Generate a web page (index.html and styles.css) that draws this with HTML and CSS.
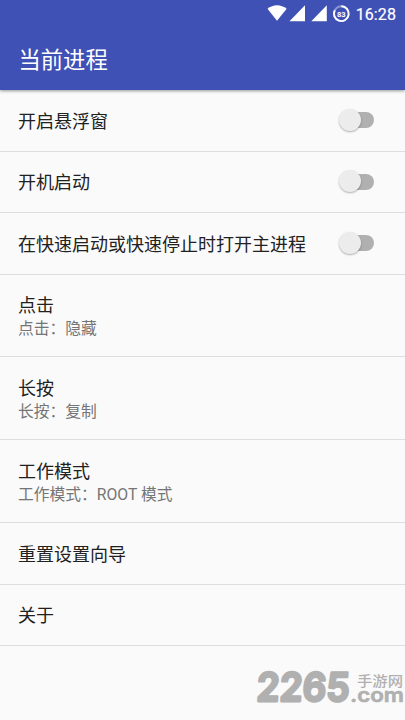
FILE: index.html
```
<!DOCTYPE html>
<html lang="zh-CN">
<head>
<meta charset="utf-8">
<title>当前进程</title>
<link rel="stylesheet" href="styles.css">
</head>
<body>
<header class="appbar">
  <div class="status">
    <svg class="status-icons" width="84" height="27" viewBox="0 0 84 27">
      <path d="M0.5 8.7C6 4 14 4 19.7 8.7L10 20.8Z" fill="#fff"/>
      <path d="M38 5.3V21.3H22.5ZM59.8 5.3V21.3H44.3Z" fill="#fff"/>
      <circle cx="74.3" cy="13.7" r="7.4" fill="none" stroke="#8c97d2" stroke-width="1.9"/>
      <path d="M74.3 6.3A7.4 7.4 0 1 1 67.8 10.2" fill="none" stroke="#fff" stroke-width="1.9"/>
      <text x="74.3" y="16.6" text-anchor="middle" class="battery">83</text>
    </svg>
    <span class="clock">16:28</span>
  </div>
  <h1 class="title">当前进程</h1>
</header>
<main class="list">
  <div class="row"><span class="label">开启悬浮窗</span><span class="switch"></span></div>
  <div class="row"><span class="label">开机启动</span><span class="switch"></span></div>
  <div class="row"><span class="label">在快速启动或快速停止时打开主进程</span><span class="switch"></span></div>
  <div class="row tall"><span class="label">点击</span><span class="summary">点击：隐藏</span></div>
  <div class="row tall"><span class="label">长按</span><span class="summary">长按：复制</span></div>
  <div class="row tall"><span class="label">工作模式</span><span class="summary">工作模式：ROOT 模式</span></div>
  <div class="row"><span class="label">重置设置向导</span></div>
  <div class="row"><span class="label">关于</span></div>
</main>
<svg class="watermark" width="152" height="51" viewBox="0 0 152 51">
  <text class="wm-number" transform="translate(3 32.3) skewX(-3)" textLength="93" lengthAdjust="spacingAndGlyphs">2265</text>
  <text class="wm-name" x="104" y="17" textLength="46" lengthAdjust="spacingAndGlyphs">手游网</text>
  <text class="wm-domain" x="97" y="33" textLength="54" lengthAdjust="spacingAndGlyphs">.com</text>
</svg>
</body>
</html>
```
FILE: styles.css
```
* { box-sizing: border-box; }
body {
  margin: 0;
  height: 720px;
  overflow: hidden;
  position: relative;
  background: #fafafa;
  color: #212121;
  font-family: Roboto, "Noto Sans CJK SC", sans-serif;
}
.appbar {
  position: relative;
  height: 90px;
  background: #3f51b5;
  color: #fff;
  box-shadow: 0 1px 3px rgba(0, 0, 0, .4);
}
.status {
  height: 27px;
  padding-right: 9px;
  display: flex;
  justify-content: flex-end;
  align-items: center;
}
.status-icons { margin-right: 5px; }
.battery { font: bold 7.5px Roboto, sans-serif; fill: #fff; }
.clock { font-size: 16px; line-height: 27px; letter-spacing: .1px; padding-top: 2px; -webkit-text-stroke: .2px #fff; }
.title {
  margin: 0;
  padding: 2px 0 0 18.5px;
  font-size: 22.3px;
  line-height: 63px;
  font-weight: 400;
}
.row {
  height: 61.5px;
  padding: 0 31px 0 18px;
  border-bottom: 1px solid #dedede;
  display: flex;
  align-items: center;
  justify-content: space-between;
}
.row.tall {
  height: 82.9px;
  padding-top: 3px;
  flex-direction: column;
  align-items: flex-start;
  justify-content: center;
}
.label { font-size: 18px; line-height: 24px; white-space: nowrap; }
.row:not(.tall) .label { padding-top: 3px; }
.summary { font-size: 15.75px; line-height: 21px; color: #757575; }
.switch {
  position: relative;
  width: 32px;
  height: 16px;
  border-radius: 8px;
  background: #b0b0b0;
}
.switch::before {
  content: "";
  position: absolute;
  left: -3px;
  top: -3.5px;
  width: 22px;
  height: 22px;
  border-radius: 50%;
  background: #ececec;
  box-shadow: 0 1px 2px rgba(0, 0, 0, .3);
}
.watermark { position: absolute; left: 253px; top: 669px; fill: #b0b0b0; }
.wm-number { font: 600 39px/1 Inter, sans-serif; stroke: #b0b0b0; stroke-width: 2.8; stroke-linejoin: round; }
.wm-name { font: 500 14px/1 "Noto Sans CJK SC", sans-serif; }
.wm-domain { font: 600 20px/1 Inter, sans-serif; stroke: #b0b0b0; stroke-width: .6; stroke-linejoin: round; }
```
